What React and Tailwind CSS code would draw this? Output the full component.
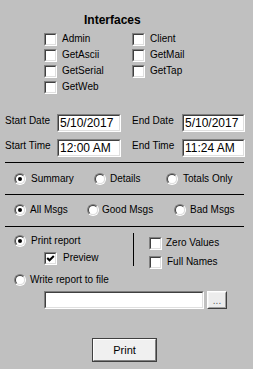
import React from "react";

const CB = ({ checked }) => (
  <span className="block w-[13px] h-[13px] shrink-0 border border-t-[#808080] border-l-[#808080] border-r-white border-b-white">
    <span className="relative block w-full h-full bg-white border border-t-[#404040] border-l-[#404040] border-r-[#dfdfdf] border-b-[#dfdfdf]">
      {checked && (
        <svg className="absolute left-0 top-0" width="9" height="9" viewBox="0 0 9 9">
          <polyline points="1.2,4 3.5,6.3 7.8,2" fill="none" stroke="#000" strokeWidth="2" />
        </svg>
      )}
    </span>
  </span>
);

const Radio = ({ on }) => (
  <span className="block w-[12px] h-[12px] shrink-0 rounded-full border border-t-[#808080] border-l-[#808080] border-r-white border-b-white">
    <span className="flex items-center justify-center w-full h-full rounded-full bg-white border border-t-[#404040] border-l-[#404040] border-r-[#dfdfdf] border-b-[#dfdfdf]">
      {on && <span className="block w-[4px] h-[4px] rounded-full bg-black" />}
    </span>
  </span>
);

const Field = ({ w, children }) => (
  <div className={`${w} h-[18px] shrink-0 border border-t-[#808080] border-l-[#808080] border-r-white border-b-white`}>
    <div className="w-full h-full bg-white border border-t-[#404040] border-l-[#404040] border-r-[#dfdfdf] border-b-[#dfdfdf] pl-[1px] text-[12px] leading-[14px] whitespace-nowrap overflow-hidden">
      {children}
    </div>
  </div>
);

const CheckRow = ({ label, checked }) => (
  <div className="h-[16px] flex items-center">
    <CB checked={checked} />
    <span className="ml-[5px] whitespace-nowrap">{label}</span>
  </div>
);

const RadioItem = ({ label, on, w, gap }) => (
  <div className={`${w} flex items-center`}>
    <Radio on={on} />
    <span className={`${gap} whitespace-nowrap`}>{label}</span>
  </div>
);

export default function App() {
  const ifaces = ["Admin", "Client", "GetAscii", "GetMail", "GetSerial", "GetTap", "GetWeb"];
  return (
    <div className="w-[253px] h-[369px] overflow-hidden bg-[#c0c0c0] text-black text-[10px] leading-[12px] font-['Liberation_Sans',Arial,sans-serif]">
      <div className="pt-[13px] pl-[84px] text-[12px] leading-[14px] font-bold">Interfaces</div>
      <div className="mt-[4px] pl-[44px] grid grid-cols-[88px_88px]">
        {ifaces.map((l) => (
          <CheckRow key={l} label={l} />
        ))}
      </div>

      <div className="mt-[19px] px-[5px] flex flex-col gap-[7px]">
        <div className="flex items-start">
          <span className="w-[52px] mt-[1px] whitespace-nowrap">Start Date</span>
          <Field w="w-[64px]">5/10/2017</Field>
          <span className="ml-[11px] w-[50px] mt-[1px] whitespace-nowrap">End Date</span>
          <Field w="w-[63px]">5/10/2017</Field>
        </div>
        <div className="flex items-start">
          <span className="w-[52px] mt-[1px] whitespace-nowrap">Start Time</span>
          <Field w="w-[64px]">12:00 AM</Field>
          <span className="ml-[11px] w-[50px] mt-[1px] whitespace-nowrap">End Time</span>
          <Field w="w-[63px]">11:24 AM</Field>
        </div>
      </div>

      <div className="mt-[5px] ml-[5px] w-[239px] h-px bg-black" />

      <div className="mt-[8px] h-[16px] pl-[14px] flex items-center">
        <RadioItem label="Summary" on w="w-[80px]" gap="ml-[5px]" />
        <RadioItem label="Details" w="w-[72px]" gap="ml-[4px]" />
        <RadioItem label="Totals Only" w="" gap="ml-[5px]" />
      </div>

      <div className="mt-[7px] ml-[5px] w-[239px] h-px bg-black" />

      <div className="mt-[7px] h-[16px] pl-[14px] flex items-center">
        <RadioItem label="All Msgs" on w="w-[73px]" gap="ml-[4px]" />
        <RadioItem label="Good Msgs" w="w-[87px]" gap="ml-[3px]" />
        <RadioItem label="Bad Msgs" w="" gap="ml-[4px]" />
      </div>

      <div className="mt-[8px] ml-[5px] w-[239px] h-px bg-black" />

      <div className="mt-[6px] h-[33px] pl-[14px] flex items-start">
        <div className="w-[119px]">
          <div className="h-[16px] flex items-center">
            <Radio on />
            <span className="ml-[5px] whitespace-nowrap">Print report</span>
          </div>
          <div className="mt-[1px] h-[16px] pl-[30px] flex items-center">
            <CB checked />
            <span className="ml-[6px] whitespace-nowrap">Preview</span>
          </div>
        </div>
        <div className="w-px h-[33px] bg-black" />
        <div className="pl-[15px] pt-[2px] flex flex-col gap-[3px]">
          <div className="h-[16px] flex items-center">
            <CB />
            <span className="ml-[4px] whitespace-nowrap">Zero Values</span>
          </div>
          <div className="h-[16px] flex items-center">
            <CB />
            <span className="ml-[5px] whitespace-nowrap">Full Names</span>
          </div>
        </div>
      </div>

      <div className="mt-[6px] h-[16px] pl-[14px] flex items-center">
        <Radio />
        <span className="ml-[4px] whitespace-nowrap">Write report to file</span>
      </div>

      <div className="mt-[3px] pl-[44px] flex gap-[3px]">
        <Field w="w-[160px]"></Field>
        <div className="w-[20px] h-[18px] border border-t-white border-l-white border-r-[#404040] border-b-[#404040]">
          <div className="w-full h-full bg-[#ececec] border border-t-[#f4f4f4] border-l-[#f4f4f4] border-r-[#a0a0a0] border-b-[#a0a0a0] flex items-center justify-center text-[#606060] text-[10px] leading-[10px] pt-[2px]">
            ...
          </div>
        </div>
      </div>

      <div className="mt-[29px] ml-[92px] w-[65px] h-[24px] border border-[#404040]">
        <div className="w-full h-full bg-[#f0f0f0] border border-t-white border-l-white border-r-[#808080] border-b-[#808080] flex items-center justify-center text-[11px] leading-[13px]">
          Print
        </div>
      </div>
    </div>
  );
}
